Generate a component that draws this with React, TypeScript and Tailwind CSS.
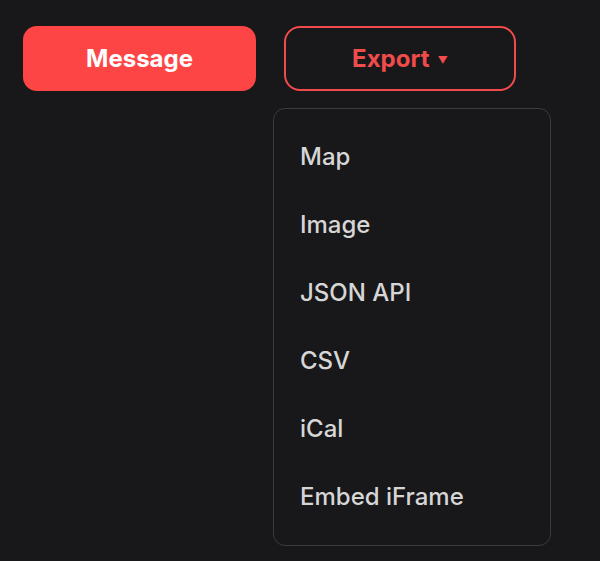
import { useState } from 'react';

const items = ['Map', 'Image', 'JSON API', 'CSV', 'iCal', 'Embed iFrame'];

export default function App() {
  const [open, setOpen] = useState(true);

  return (
    <div className="min-h-[561px] w-full bg-[#18181a] font-['Inter',sans-serif]">
      <div className="flex gap-7 pl-[23px] pt-[26px]">
        <button className="flex h-[65px] w-[233px] items-center justify-center rounded-[14px] bg-[#fd4545] text-[24px] font-bold text-white">
          Message
        </button>
        <div className="relative">
          <button
            onClick={() => setOpen(!open)}
            className="flex h-[65px] w-[232px] items-center justify-center gap-2 rounded-[16px] border-2 border-[#f14b4b] text-[24px] font-bold text-[#f14b4b]"
          >
            Export
            <span className="mt-1 text-[10px]">▼</span>
          </button>
          {open && (
            <div className="absolute left-[-11px] top-[82px] w-[278px] rounded-[12px] border border-[#3a3b41] bg-[#18181a] py-[14px]">
              {items.map((item) => (
                <div
                  key={item}
                  className="flex h-[68px] items-center px-[26px] text-[24px] font-medium text-[#d6d6d6]"
                >
                  {item}
                </div>
              ))}
            </div>
          )}
        </div>
      </div>
    </div>
  );
}
